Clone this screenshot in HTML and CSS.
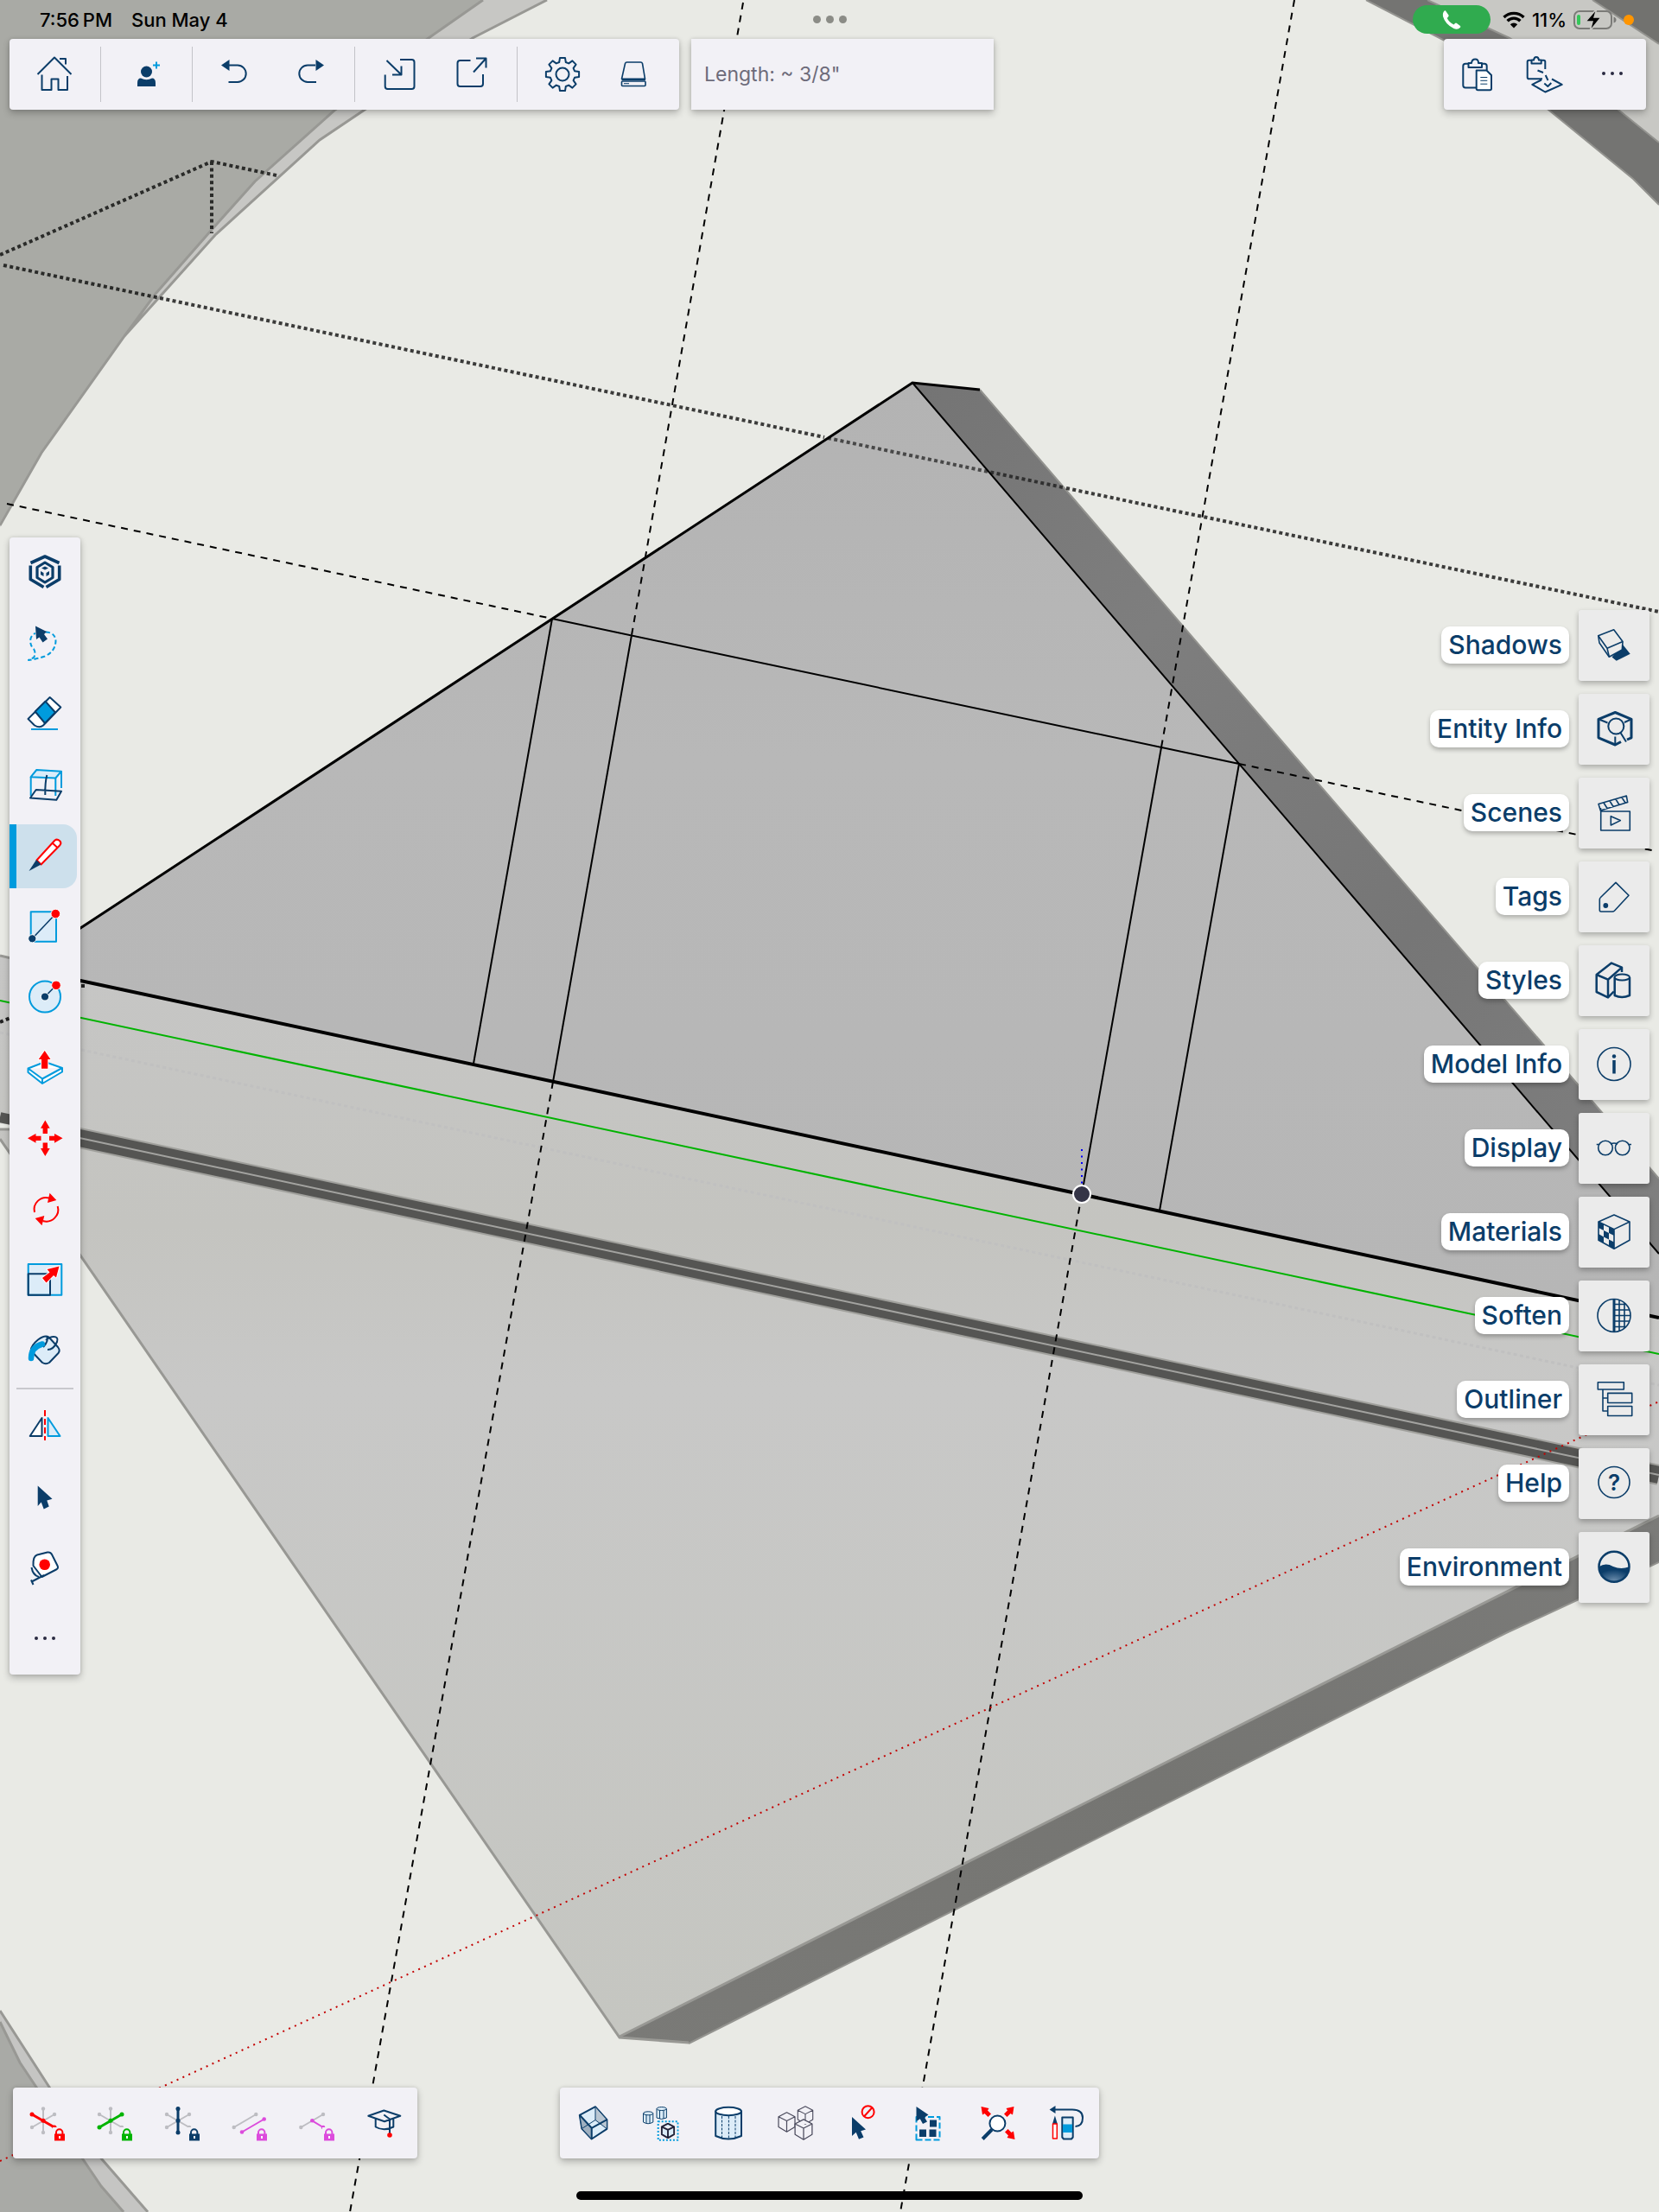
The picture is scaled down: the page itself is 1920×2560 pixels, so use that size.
FILE: index.html
```html
<!DOCTYPE html>
<html lang="en">
<head>
<meta charset="utf-8">
<meta name="viewport" content="width=device-width, initial-scale=1">
<title>Model editor</title>
<link rel="stylesheet" href="styles.css">
</head>
<body>
<div class="app">

<svg class="scene" viewBox="0 0 1920 2560" preserveAspectRatio="xMidYMid slice" aria-hidden="true">
  <defs>
    <linearGradient id="face" x1="0" y1="0" x2="0" y2="1"><stop offset="0" stop-color="#b3b3b3"/><stop offset=".4" stop-color="#b8b8b8"/><stop offset="1" stop-color="#b6b6b6"/></linearGradient>
    <linearGradient id="slab" x1="0" y1="0" x2="0" y2="1"><stop offset="0" stop-color="#c6c6c5"/><stop offset=".25" stop-color="#c4c4c0"/><stop offset=".4" stop-color="#c8c8c7"/><stop offset="1" stop-color="#c5c6c1"/></linearGradient>
    <linearGradient id="side" x1="0" y1="0" x2="1" y2="1"><stop offset="0" stop-color="#747474"/><stop offset=".3" stop-color="#7e7e7e"/><stop offset=".65" stop-color="#767676"/><stop offset="1" stop-color="#808080"/></linearGradient>
    <linearGradient id="lip" x1="0" y1="1" x2="1" y2="0"><stop offset="0" stop-color="#7a7a77"/><stop offset=".5" stop-color="#757572"/><stop offset="1" stop-color="#7b7b79"/></linearGradient>
  </defs>
  <!-- corner discs -->
  <path fill="#c7c7c4" d="M0 0H633L547 44 422 127 370 162 249 272 188 340 144 389 48 524 0 610Z"/>
  <path fill="#a9aaa5" d="M0 0H559L496 44 388 127 295 210 180 340 144 389 48 524 0 605Z"/>
  <path class="rim" d="M633 0L547 44 422 127 370 162 249 272 188 340 144 389 48 524 0 608M559 0L496 44 388 127 295 210 244 267 180 340 144 389"/>
  <path fill="#c8c8c4" d="M1600 0H1920V200Z"/>
  <path fill="#747472" d="M1581 0H1652L1747 44 1873 127 1920 165V237L1890 207 1792 127 1670 46Z"/>
  <path fill="#72726f" d="M1843 0H1920V51Z"/>
  <path class="rim thin" d="M1581 0L1670 46 1792 127 1890 207 1920 237M1652 0L1747 44 1873 127 1920 165M1843 0L1920 51"/>
  <path fill="#c5c5c3" d="M0 2327L58 2417 118 2499 171 2560H0Z"/>
  <path fill="#a9aaa6" d="M0 2340L23 2387 43 2417 96 2499 117 2530 143 2560H0Z"/>
  <path class="rim" d="M0 2327L58 2417 118 2499 171 2560M0 2340L23 2387 43 2417 96 2499 117 2530 143 2560"/>
  <!-- slab below the triangle -->
  <path fill="url(#slab)" d="M0 1106L93 1127 1920 1500V1760L717 2358 0 1318Z"/>
  <path fill="url(#lip)" d="M717 2357L1650 1889 1920 1754V1808L1743 1890 797 2365Z"/>
  <path class="rim" d="M0 1106L60 1120M0 1318L717 2358 797 2364M717 2357L1650 1889 1920 1754"/>
  <path class="rim thin" d="M797 2365L1743 1890 1920 1808"/>
  <path fill="#e9eae5" d="M0 1300L60 1309V1315L0 1306Z"/>
  <path class="rim" d="M0 1307H50"/>
  <g fill="none">
    <path stroke="#a0a09c" stroke-width="24" d="M50 1308L1920 1707"/>
    <path stroke="#555553" stroke-width="20" d="M50 1308L1920 1707"/>
    <path stroke="#555553" stroke-width="12" d="M0 1293L60 1306"/>
    <path stroke="#a3a3a0" stroke-width="2" d="M50 1308L1920 1707"/>
    <path stroke="#c0c0c0" stroke-width="3" stroke-dasharray="4 3.4" d="M0 1195L1920 1603"/>
    <path stroke="#00b300" stroke-width="2" d="M0 1158L1920 1567"/>
  </g>
  <!-- triangle -->
  <path fill="url(#side)" d="M1056 443L1134 451 1500 877 1920 1364V1451Z"/>
  <path fill="url(#face)" d="M23 1120L1056 443 1920 1451V1525Z"/>
  <path class="rim thin" d="M1134 451L1500 877 1920 1364"/>
  <g fill="none" stroke="#000" stroke-width="2">
    <path stroke-width="3" d="M23 1120L1056 443 1134 451"/>
    <path stroke-width="4" d="M23 1120L1920 1525"/>
    <path d="M1056 443L1920 1451M639 716L1434 884M639 716L548 1231M731 735L640 1252M1344 865L1252 1382M1434 884L1342 1401"/>
    <path stroke-dasharray="8 7" d="M860 3L731 735M640 1252L405 2560M1498 0L1344 865M1252 1382L1042 2560M8 583L639 716M1434 884L1916 985"/>
    <path stroke="#000" stroke-opacity=".75" stroke-width="4" stroke-dasharray="4 3.4" d="M0 295L245 187 320 203M245 187V270M4 307L954 506M1234 565L1920 708"/>
    <path stroke="#000" stroke-opacity=".6" stroke-width="4" stroke-dasharray="4 3.4" d="M958 507L1230 564"/>
    <path stroke="#222" stroke-width="4" stroke-dasharray="4 3.4" d="M0 1183L12 1178M94 1141H98"/>
    <path stroke="#c40000" stroke-dasharray="2 5.5" d="M0 2501L1920 1622"/>
    <path stroke="#00f" stroke-dasharray="2 5.5" d="M1252 1330V1380"/>
  </g>
  <circle cx="1252" cy="1382" r="10" fill="#353547" stroke="#fff" stroke-width="2"/>
</svg>

<svg class="defs" aria-hidden="true">
  <symbol id="axes" viewBox="0 0 60 60"><path fill="none" stroke="#bdbdc2" stroke-width="2" d="M26 13.5V41M13 20L39 35M39 20L13 35"/><g fill="#bdbdc2"><circle cx="26" cy="13.5" r="2.2"/><circle cx="26" cy="41" r="2.2"/><circle cx="13" cy="20" r="2.2"/><circle cx="39" cy="35" r="2.2"/><circle cx="39" cy="20" r="2.2"/><circle cx="13" cy="35" r="2.2"/></g></symbol>
  <symbol id="lock" viewBox="0 0 60 60"><path fill="#f2f1f6" d="M37 35h16v18H37z"/><path fill="none" stroke="currentColor" stroke-width="2" d="M41 43v-2a3.7 3.7 0 0 1 7.400 0v2"/><path fill="currentColor" d="M39 42.500h12v8H39z"/><path fill="#fff" d="M44 45h2v3h-2z"/></symbol>
  <symbol id="cube" viewBox="0 0 24 24"><path d="M12 .8L21.500 5.800V17.500L12 23.200 2.500 17.500V5.800ZM2.500 5.800L12 10.500 21.500 5.800M12 10.500V23"/></symbol>
</svg>

<div class="ui">
  <header class="top">
    <div class="status">
      <div class="clock"><time>7:56&#8201;PM</time><span>Sun May 4</span></div>
      <div class="grabber"><i></i><i></i><i></i></div>
      <div class="system">
        <span class="call"><svg width="24" height="24" viewBox="0 0 24 24"><path fill="#fff" d="M5 1.500L8.500 6.500Q9 7.500 8 8.500L6.800 10Q9 15 14.500 17.500L16 16Q17 15.200 18 16L22 19Q22.700 20 22 20.800 19 24 14.500 22 4.500 17 2 8 1.300 3.500 4 1.300 4.600 1 5 1.500Z"/></svg></span>
        <svg width="26" height="20" viewBox="0 0 26 20"><g fill="none" stroke="#000" stroke-width="3.400"><path d="M1.500 7A16.500 16.500 0 0 1 24.500 7M5.600 11.200A10.500 10.500 0 0 1 20.400 11.200"/></g><path d="M13 19.500L8.800 15.200A6 6 0 0 1 17.200 15.200Z"/></svg>
        <span>11%</span>
        <svg width="50" height="26" viewBox="0 0 50 26"><rect x="1" y="3" width="43" height="20" rx="6" fill="none" stroke="#7b7b78" stroke-width="2"/><path fill="#7b7b78" d="M46.500 9.500q3 1 3 3.500t-3 3.500z"/><rect x="4" y="7" width="4" height="12" rx="2" fill="#34c759"/><path stroke="#c8c8c4" stroke-width="1.500" d="M27 0L14 15h8l-3 11 13-16h-8z"/></svg>
        <i class="privacy"></i>
      </div>
    </div>
    <div class="bars">
      <nav class="bar" aria-label="File">
        <div class="group"><button aria-label="Home"><svg viewBox="0 0 60 60"><path d="M10.500 30L30 10.500 49.500 30M36 12h7v6.500M15.500 30.500V48H26.500V35.500H34.500V48H45V32"/></svg></button></div>
        <div class="group"><button aria-label="Share"><svg viewBox="0 0 60 60"><ellipse class="solid" cx="30.500" cy="27" rx="6.500" ry="6.500"/><path class="solid" d="M20 44V40Q20 34.500 24 34.500 30.500 38 37 34.500 41 34.500 41 40V44Z"/><path class="sky" d="M42 15.500v8M38 19.500h8"/></svg></button></div>
        <div class="group"><button aria-label="Undo"><svg viewBox="0 0 60 60"><path class="solid" d="M11 19.500L20.500 13V26Z"/><path d="M20 19.500H30a9.700 9.700 0 0 1 0 19.400H19.500"/></svg></button><button aria-label="Redo"><svg viewBox="0 0 60 60"><path class="solid" d="M48 19.500L38.500 13V26Z"/><path d="M38 19.500H29a9.700 9.700 0 0 0 0 19.400H39"/></svg></button></div>
        <div class="group"><button aria-label="Import"><svg viewBox="0 0 60 60"><path d="M14.500 14L31.500 30.500V20.500M31.500 30.500H21M12.700 30.500V44q0 3 3 3H43.500q3 0 3-3V16q0-3-3-3H30"/></svg></button><button aria-label="Export"><svg viewBox="0 0 60 60"><path d="M29.500 14H17.500q-3 0-3 3V41q0 3 3 3H41q3 0 3-3V30M33 27.500L47.500 11.500M36 11.500H47.500V22.500"/></svg></button></div>
        <div class="group"><button aria-label="Settings"><svg viewBox="-30 -30 60 60"><path d="M14-3.800L19.100-3V3L14 3.800 12.600 7.200 15.600 11.400 11.400 15.600 7.200 12.600 3.800 14 3 19.100H-3L-3.800 14-7.200 12.600-11.400 15.600-15.600 11.400-12.600 7.200-14 3.800-19.100 3V-3L-14-3.800-12.600-7.200-15.600-11.400-11.400-15.600-7.200-12.600-3.800-14-3-19.100H3L3.800-14 7.200-12.600 11.400-15.600 15.600-11.400 12.600-7.200Z"/><circle r="7.500"/></svg></button><button aria-label="Storage"><svg viewBox="0 0 60 60"><path class="fine" d="M22.500 16h16q1.500 0 2 1.500L43.500 35.300H16.500L20.500 17.500q.5-1.500 2-1.500Z"/><rect class="fine" x="16.500" y="38" width="27.500" height="5.500" rx="1"/><path class="hair" d="M16.500 36.500h27.500M19 40.700h6"/></svg></button></div>
      </nav>
      <input class="measure" type="text" aria-label="Measurement" value="Length: ~ 3/8&quot;">
      <nav class="bar bar-right" aria-label="Clipboard">
        <button aria-label="Paste"><svg viewBox="0 0 60 60"><path d="M28 45.500H16q-2.700 0-2.700-2.700V20.500q0-2.700 2.700-2.700h3.500M35 17.800h3q2.700 0 2.700 2.700V25M19.500 22V17H23Q23.500 12.500 27.300 12.500T31 17H35V22Z"/><path fill="#fff" d="M28.700 25.500H40.500L46 31V46.500q0 1.700-1.700 1.700H30.400q-1.700 0-1.700-1.700Z"/><path class="hair" d="M33.300 33.500h8M33.300 37.300h8M33.300 41.200h8"/></svg></button>
        <button aria-label="Paste in place"><svg viewBox="0 0 60 60"><path d="M27 35.200H11.500q-1.800 0-1.800-1.800V15.500q0-1.800 1.800-1.800H14.500M26 13.800H28.500q1.800 0 1.800 1.800V24M14.500 17.500V13.500H17Q17.500 10 20 10T23 13.500H25.700V17.500ZM21.500 25.500L28 28M30.700 31L33.500 37M29.300 40.500L33.300 44 37.300 40M26 36.500L15.300 41.800 30.300 50.500 49.700 41.800 38 35.500"/></svg></button>
        <button aria-label="More"><svg viewBox="0 0 60 60"><g class="dots"><circle cx="20" cy="29" r="2"/><circle cx="30" cy="29" r="2"/><circle cx="40" cy="29" r="2"/></g></svg></button>
      </nav>
    </div>
  </header>

  <main class="middle">
    <nav class="tools" aria-label="Tools">
      <button aria-label="Orbit cube"><svg viewBox="0 0 60 60"><g stroke-width="4"><path d="M13.500 18.500L30 11 46.500 18.500" stroke-width="3.600"/><path stroke-width="3.600" d="M13.300 21.500V37.500L28.500 46.500M46.700 21.500V37.500L31.500 46.500"/><path stroke-width="3.200" d="M30 18L39 23.500V35.500L30 41 21 35.500V23.500Z"/></g><path class="solid" d="M30 22.500l4 2-4 2-4-2zM25 28l3.500 2v4L25 32zM35 28l-3.500 2v4l3.500-2z"/></svg></button>
      <button aria-label="Lasso"><svg viewBox="0 0 60 60"><path class="sky" stroke-dasharray="5 3" d="M31 16.500Q42 17 42.500 27 42 39 30 44.500 20 48 11 49L17 46Q20 41 17 36 12 31 13.500 24 15 19 19 18"/><path class="solid" d="M19 9.500L32 16 29 19 33 24.500 27.500 28.500 23.500 22.500 20 25Z"/></svg></button>
      <button aria-label="Eraser"><svg viewBox="0 0 60 60"><path fill="#fff" d="M10.500 35L35.700 10 48.300 21.500 28 42.500Q24 46 18 42.500Z"/><path fill="#009bdd" d="M18.700 26.500L30.500 14.700 42 27.500 30 40Z"/><path class="sky" d="M14 47h31"/></svg></button>
      <button aria-label="Section"><svg viewBox="0 0 60 60"><path class="sky" fill="#d9ecf9" d="M13.700 20.200L20.300 12 49 13.700 42.300 21.500Z"/><path class="sky" d="M13.700 20V42M42.300 21.500V42M49 13.700V33"/><path d="M13 44.500L19.700 35 49 36.700 43.300 46.700ZM32.300 18Q30 27 30.300 41"/></svg></button>
      <button class="active" aria-label="Line" aria-pressed="true"><svg viewBox="0 0 60 60"><path class="red" fill="#fff" d="M20.500 34.500L41.500 11.500Q44 9.500 47 12 49.500 14.500 47.500 17L25.500 39.500ZM38.500 14.500L44.500 20"/><path class="solid" d="M11.500 47L20 34 25.500 39.500Z"/></svg></button>
      <button aria-label="Rectangle"><svg viewBox="0 0 60 60"><path class="sky" fill="#dcecf8" d="M13.700 12.300H43V46.700H13.700Z"/><path d="M15.300 43.300L42 15" stroke-width="1.600"/><circle cx="42.300" cy="14.500" r="5.300" class="dot-red"/><circle cx="15.300" cy="43.300" r="4.600" class="dot-navy"/></svg></button>
      <button aria-label="Circle"><svg viewBox="0 0 60 60"><circle class="sky" fill="#dcecf8" cx="30" cy="28.500" r="18"/><path stroke-width="1.600" d="M30 28.500L43 15.300"/><circle cx="43" cy="15.300" r="5.300" class="dot-red"/><circle cx="30" cy="28.500" r="4.600" class="dot-navy"/></svg></button>
      <button aria-label="Push pull"><svg viewBox="0 0 60 60"><path class="sky" fill="#fff" d="M10.500 29.500L30 22 50 29V33.500L27 47 10.500 34ZM10.500 29.500L27 41.500 50 29M27 41.500V47"/><path class="halo" d="M29.700 9L36.500 19H33.300V29.700H26V19H22.700Z"/></svg></button>
      <button aria-label="Move"><svg viewBox="0 0 60 60"><g class="dr"><path d="M30.300 7.500L35.700 16.700H33V23H27.600V16.700H25ZM30.300 49L35.700 40H33V33.500H27.600V40H25ZM10 28.300L19.500 23V25.700H25.500V31H19.500V33.700ZM50.500 28.300L41 23V25.700H35V31H41V33.700Z"/></g></svg></button>
      <button aria-label="Rotate"><svg viewBox="0 0 60 60"><path class="red" d="M18 32A13.700 13.700 0 0 1 35 15.500M44.700 25A13.700 13.700 0 0 1 27.500 42"/><path class="dr" d="M35.500 9.700L43.300 18 33 21ZM26.500 47.300L18.700 39 29.300 36Z"/></svg></button>
      <button aria-label="Scale"><svg viewBox="0 0 60 60"><path class="sky" fill="#dcecf8" d="M10.700 10H49.300V45.700H10.700Z"/><path d="M10.700 21.300H36V45.700H10.700Z"/><path class="halo" d="M46.500 12.500L43 25.500 40 23 31.500 31.500 27 26 35.500 19.500 32.500 16Z"/></svg></button>
      <button aria-label="Paint"><svg viewBox="0 0 60 60"><path fill="#dcecf8" d="M13.700 28L27 42Q31 44.500 35 42L45.500 31Q48 28 45 24L34.500 12.500Q30 9.500 22 15.500 14 22 13.700 28Z"/><path d="M33 27Q40 27 44 18 46 12 40 12 36 12 31 16M28 24Q35 16 32 12"/><path fill="none" stroke="#009bdd" stroke-width="6.500" stroke-linecap="round" d="M27 20.500Q14 24 14 37"/></svg></button>
      <hr>
      <button aria-label="Flip"><svg viewBox="0 0 60 60"><path fill="#fff" d="M26.500 20V41H12.700Z"/><path class="sky" fill="#dcecf8" d="M33.500 20V41H47.500Z"/><path class="red" stroke-dasharray="7 3" d="M30 11V46"/></svg></button>
      <button aria-label="Select"><svg viewBox="0 0 60 60"><path class="solid" d="M21.700 16.500V40L25.700 35.500 28.700 43.500 34.700 40.500 32.300 33.500 38.500 31.700Z"/></svg></button>
      <button aria-label="Tape measure"><svg viewBox="0 0 60 60"><path fill="#fff" d="M16.500 27Q16 16 21 14.500L33 11.500Q36.500 11 38 14L44.500 27Q46 30 43 31.500L26.500 40Z"/><path d="M14.700 45.500L29 38M14 43.500L16.500 49M14.500 29Q16 38 23 40" /><circle class="dr" cx="29.700" cy="25.800" r="6.300"/></svg></button>
      <button aria-label="More tools"><svg viewBox="0 0 60 60"><g class="dots"><circle cx="20" cy="29" r="2"/><circle cx="30" cy="29" r="2"/><circle cx="40" cy="29" r="2"/></g></svg></button>
    </nav>

    <nav class="panels" aria-label="Panels">
      <button><span class="pill">Shadows</span><span class="tile"><svg viewBox="0 0 60 60"><path class="solid" d="M27.500 43.500L40 29 48.700 39.700 32.700 47.800Z"/><path class="fine" fill="#ebebeb" d="M11.700 18.700L29.700 11.800 40 25.600 39.300 35 24.300 43.200 13 27Z"/><path class="fine" d="M11.700 18.700L22 33.200 40 25.600M22 33.200L24.300 43"/></svg></span></button>
      <button><span class="pill">Entity Info</span><span class="tile"><svg viewBox="0 0 60 60"><path stroke-width="3" d="M38 44.500L31.300 48 12 39.800V18.300L31.300 10.500 50 18.300V39.800L45 42"/><path d="M12 18.300L22.500 22.500M50 18.300L42 22M31.300 38.500V48M37.500 34L44 44.500"/><circle cx="32.300" cy="26.500" r="9"/></svg></span></button>
      <button><span class="pill">Scenes</span><span class="tile"><svg viewBox="0 0 60 60"><path class="fine" d="M14.700 28H48.300V50H14.700ZM26.300 33.700V44L37.300 38.600ZM12 19.500L44.300 10 45.700 17.600 14.300 27ZM18 18L22 24.500M25 16L29 22.500M32 14L36 20.500M39 12L43 18M14.500 28V24"/></svg></span></button>
      <button><span class="pill">Tags</span><span class="tile"><svg viewBox="0 0 60 60"><path class="fine" d="M32 13.400L47 28.300 30.500 46Q29.500 47 28 47H15Q13.300 47 13.300 45.300V33Q13.300 31.500 14.500 30.500Z"/><circle class="solid" cx="20.300" cy="40" r="2.900"/></svg></span></button>
      <button><span class="pill">Styles</span><span class="tile"><svg viewBox="0 0 60 60"><path d="M29.700 42.500L23 49.400 9.700 43V23L27 9.600 39 14.600V20M9.700 23L23 28.700 39 14.600M23 28.700V49" stroke-width="2.500"/><path fill="#ebebeb" stroke-width="2.500" d="M30.700 26V47Q39 51 48 47V26"/><ellipse fill="#ebebeb" cx="39.300" cy="26" rx="8.700" ry="3.500"/></svg></span></button>
      <button><span class="pill">Model Info</span><span class="tile"><svg viewBox="0 0 60 60"><circle class="fine" cx="30" cy="29.500" r="19"/><circle class="solid" cx="30" cy="20.500" r="2.200"/><path stroke-width="3.500" d="M30 25V40.500"/></svg></span></button>
      <button><span class="pill">Display</span><span class="tile"><svg viewBox="0 0 60 60"><g class="fine"><circle cx="20" cy="29.500" r="8.300"/><circle cx="39.700" cy="29.500" r="8.300"/><path d="M9.700 25.500H13M46.500 25.500H50M26 25Q30 23 34 25"/></g></svg></span></button>
      <button><span class="pill">Materials</span><span class="tile"><svg viewBox="0 0 60 60"><path class="fine" d="M30 10L48 18V39.300L30 49.200 12 39.300V18Z"/><path class="fine" d="M12 18L30 26.600 48 18M30 26.600V49"/><path class="solid" d="M12 18L18 21V28L12 25ZM24 24L30 26.600V34L24 31ZM18 28L24 31V38.500L18 35.500ZM12 32L18 35.500V42.500L12 39.300ZM24 38.500L30 41.500V49L24 46Z"/></svg></span></button>
      <button><span class="pill">Soften</span><span class="tile"><svg viewBox="0 0 60 60"><circle class="fine" cx="30" cy="29.500" r="19"/><path stroke-width="3" d="M30 10.500V48.500"/><path class="fine" d="M36 11.500V47.500M42 15V44M30 16.500H43M30 23H48M30 29.500H49M30 36H48M30 42.500H43"/></svg></span></button>
      <button><span class="pill">Outliner</span><span class="tile"><svg viewBox="0 0 60 60"><path class="fine" d="M11.300 9.800H41.300V18H11.300ZM22.700 22.400H50.700V33.500H22.700ZM22.700 37.500H50.700V48.500H22.700ZM17 18V43H22.700M17 28H22.700"/></svg></span></button>
      <button><span class="pill">Help</span><span class="tile"><svg viewBox="0 0 60 60"><circle class="fine" cx="30" cy="28.500" r="18"/><text x="30" y="37.500" text-anchor="middle">?</text></svg></span></button>
      <button><span class="pill">Environment</span><span class="tile"><svg viewBox="0 0 60 60"><defs><radialGradient id="globe" cx=".5" cy=".9" r=".6"><stop offset="0" stop-color="#6588a8"/><stop offset="1" stop-color="#0b3d69"/></radialGradient></defs><path fill="url(#globe)" stroke="none" d="M12.500 29.300Q20 24 29 29 38 33 47.500 29.300A17.500 17.500 0 0 1 12.500 29.300Z"/><circle stroke-width="2.500" cx="30" cy="29.300" r="17.500"/></svg></span></button>
    </nav>
  </main>

  <footer class="bottom">
    <div class="dock">
      <nav class="bar axis-bar" aria-label="Axis locks">
        <button aria-label="Lock red axis"><svg viewBox="0 0 60 60" color="#f00"><use href="#axes"/><path class="axis" d="M13 20L39 35"/><g class="ends"><circle cx="13" cy="20" r="2.500"/><circle cx="26" cy="27.300" r="2.500"/><circle cx="39" cy="35" r="2.500"/></g><use href="#lock"/></svg></button>
        <button aria-label="Lock green axis"><svg viewBox="0 0 60 60" color="#00b400"><use href="#axes"/><path class="axis" d="M39 20L13 35"/><g class="ends"><circle cx="39" cy="20" r="2.500"/><circle cx="26" cy="27.300" r="2.500"/><circle cx="13" cy="35" r="2.500"/></g><use href="#lock"/></svg></button>
        <button aria-label="Lock blue axis"><svg viewBox="0 0 60 60" color="#0b3d69"><use href="#axes"/><path class="axis" d="M26 13.500V41"/><g class="ends"><circle cx="26" cy="13.500" r="2.500"/><circle cx="26" cy="27.300" r="2.500"/><circle cx="26" cy="41" r="2.500"/></g><use href="#lock"/></svg></button>
        <button aria-label="Lock parallel"><svg viewBox="0 0 60 60" color="#dc4bdc"><path class="ghost" d="M12.700 35L38.300 20"/><g class="ghost-ends"><circle cx="12.700" cy="35" r="2.200"/><circle cx="38.300" cy="20" r="2.200"/></g><path class="axis slim" d="M22 40.500L47.700 25.500"/><g class="ends"><circle cx="22" cy="40.500" r="2.300"/><circle cx="47.700" cy="25.500" r="2.300"/></g><use href="#lock"/></svg></button>
        <button aria-label="Lock perpendicular"><svg viewBox="0 0 60 60" color="#dc4bdc"><path class="ghost" d="M12.300 35L38 20"/><g class="ghost-ends"><circle cx="12.300" cy="35" r="2.200"/><circle cx="38" cy="20" r="2.200"/></g><path class="axis slim" d="M25.300 27.300L38 35"/><g class="ends"><circle cx="25.300" cy="27.300" r="2.300"/><circle cx="38" cy="35" r="2.300"/></g><use href="#lock"/></svg></button>
        <button aria-label="Learn"><svg viewBox="0 0 60 60"><path d="M12.300 21.800L30.300 15.500 49.300 21.800 31 28.200ZM20.700 25V34.500Q30 40 41.300 34.500V25M30.300 20.500L37 25.500V42"/><circle class="dr" cx="37" cy="44" r="2.800"/></svg></button>
      </nav>
      <nav class="bar" aria-label="View">
        <button aria-label="X-ray"><svg viewBox="0 0 60 60"><path fill="#dcecf8" d="M13.800 20.800L32 11.200 45.400 26.200V36.800L27.700 48.500 16.400 36.500Z"/><path class="hair" fill="#9fb0c0" d="M13.800 20.800L27.700 35.800V48.500L16.400 36.500Z"/><path class="hair" fill="#b9c6d2" d="M32 11.200V26.500L45.400 36.800V26.200Z"/><path class="hair" d="M16.400 36.500L32 26.500"/><path d="M13.800 20.800L27.700 35.800 45.400 26.200M27.700 35.800V48"/></svg></button>
        <button aria-label="Hide rest of model"><svg viewBox="0 0 60 60"><g class="hair" fill="#dcecf8"><path d="M9.500 19V29Q15 32.500 20.800 29V19M25 13.500V24Q30.500 27 36.400 24V13.500M13 20V30M17 20V30M28.500 15V25M33 15V25"/><ellipse cx="15.200" cy="18.800" rx="5.600" ry="2"/><ellipse cx="30.700" cy="13.500" rx="5.600" ry="2"/></g><path class="sky" stroke-dasharray="2 2" d="M26.700 28.200H49.500V49.800H26.700Z"/><g class="kept"><use href="#cube" x="29" y="30" width="18" height="18"/></g></svg></button>
        <button aria-label="Hidden geometry"><svg viewBox="0 0 60 60"><path fill="#dcecf8" d="M15.200 16.500V45Q30 52 45 45V16.500Z"/><ellipse fill="#fff" cx="30.100" cy="16.500" rx="14.900" ry="4.700"/><path class="hair" stroke-dasharray="3 1.500" d="M22.500 22V48M30.400 22V49M38 22V48"/></svg></button>
        <button aria-label="Hidden objects"><svg viewBox="0 0 60 60"><g class="boxes"><use href="#cube" x="28" y="10" width="26" height="22"/><use href="#cube" x="5" y="17" width="29" height="24"/><use href="#cube" x="24" y="25" width="30" height="25"/></g></svg></button>
        <button aria-label="Deselect"><svg viewBox="0 0 60 60"><path class="solid" d="M17 23V45L21.700 40.800 25 48.700 30.500 46.500 27.200 39.200 33 37.500Z"/><circle class="red" cx="35.600" cy="17.200" r="7"/><path class="red" d="M31 22.500L40.500 12"/></svg></button>
        <button aria-label="Select all"><svg viewBox="0 0 60 60"><path class="sky" stroke-dasharray="7 3" d="M13.500 49.500V23H40.500V49.500Z"/><path class="solid" d="M29 26.500h8v8h-8zM17 37.500h8V46h-8zM28.500 37.500h8V46h-8z"/><path class="solid" d="M13.500 11V28L17.800 25.200 21 31 26 28.500 23 23.500 27.500 20.500Z"/></svg></button>
        <button aria-label="Zoom extents"><svg viewBox="0 0 60 60"><path stroke-width="4" d="M23 37.500L12.200 48.500"/><circle fill="#fff" cx="29.400" cy="30.500" r="9"/><path class="dr" d="M10.500 11L19.500 13 18 15.500 22 19.500 18.500 23 14.500 19 12 20.500ZM48.500 11L39.500 13 41 15.500 37 19.500 40.500 23 44.500 19 47 20.500ZM49.500 49L40.500 47 42 44.500 38 40.500 41.500 37 45.500 41 48 39.500Z"/></svg></button>
        <button aria-label="Reset workspace"><svg viewBox="0 0 60 60"><path class="solid" d="M11.600 14.500L18.500 10V19Z"/><path d="M18 14.500H38Q50 14.500 50 24 50 33.500 41.500 34"/><path class="solid" d="M17.900 21.500L20.800 31H15Z"/><path class="barrel" d="M15.500 31h4.800v17h-4.800z"/><path fill="#dcecf8" d="M26.300 23.500H38.700V46.500L37 48.500H28L26.300 46.500Z"/><path class="band" d="M27 31.500h11v9.500h-11z"/></svg></button>
      </nav>
    </div>
    <div class="home-indicator"></div>
  </footer>
</div>
</div>
</body>
</html>
```
FILE: styles.css
```css
* { box-sizing: border-box; }

:root {
  --navy: #0b3d69;
  --sky: #009bdd;
  --panel: #f2f1f6;
  --shadow: 0 4px 8px rgba(0, 0, 0, .24), 0 0 4px rgba(0, 0, 0, .12);
}

body {
  margin: 0;
  font-family: Inter, "Liberation Sans", sans-serif;
  color: #000;
}

.app {
  position: relative;
  min-height: 100vh;
  background: #e9eae5;
  overflow: hidden;
}

.scene {
  position: absolute;
  inset: 0;
  width: 100%;
  height: 100%;
}

.scene .rim { fill: none; stroke: #989894; stroke-width: 3; }
.scene .rim.thin { stroke-width: 2; stroke: #93938f; }
.defs { position: absolute; width: 0; height: 0; }

/* the interface floats above the drawing */
.ui {
  position: relative;
  min-height: 100vh;
  display: grid;
  grid-template-rows: 1fr auto 1fr;
}

button {
  border: 0;
  padding: 0;
  background: none;
  font: inherit;
  color: inherit;
  cursor: pointer;
}

button svg {
  display: block;
  width: 60px;
  height: 60px;
  fill: none;
  stroke: var(--navy);
  stroke-width: 2;
  stroke-linejoin: round;
}

button svg .solid { fill: var(--navy); stroke-width: 0; }
button svg .sky { stroke: var(--sky); }
button svg .red { stroke: #f00; }
button svg .dr { fill: #f00; stroke: none; }
button svg .halo { fill: #f00; stroke: #fff; stroke-width: 2; paint-order: stroke; }
button svg .dot-red { fill: #f00; stroke: #fff; stroke-width: 1; }
button svg .dot-navy { fill: var(--navy); stroke: #fff; stroke-width: 1; }
button svg .fine { stroke-width: 1.6; }
button svg .hair { stroke-width: 1; }
button svg .dots { fill: #2a2a40; stroke: none; }
button svg .axis { stroke: currentColor; stroke-width: 3; }
button svg .axis.slim { stroke-width: 2; }
button svg .ends { fill: currentColor; stroke: none; }
button svg .ghost { stroke: #bdbdc2; }
button svg .ghost-ends { fill: #bdbdc2; stroke: none; }
button svg .kept { fill: #dcecf8; stroke: #222238; stroke-width: 2.5; }
button svg .boxes { fill: #f2f1f6; stroke: #4a4a5c; stroke-width: 1.2; }
button svg .barrel { fill: #fff; stroke: #f00; stroke-width: 1.5; }
button svg .band { fill: var(--sky); stroke: none; }
button svg text { font-size: 26px; font-weight: 600; fill: var(--navy); stroke: none; }
button svg use[href="#axes"], button svg use[href="#lock"] { stroke: none; }

/* status bar */
.status {
  display: grid;
  grid-template-columns: 1fr auto 1fr;
  align-items: center;
  height: 45px;
  padding: 0 29px;
  font-size: 22px;
  font-weight: 500;
}

.clock { display: flex; gap: 22px; padding-left: 17px; }
.grabber { display: flex; gap: 6px; }
.grabber i { width: 9px; height: 9px; border-radius: 50%; background: #8b8c86; }
.system { display: flex; align-items: center; justify-content: flex-end; gap: 8px; }

.call {
  display: flex;
  align-items: center;
  justify-content: center;
  width: 90px;
  height: 33px;
  margin-right: 6px;
  border-radius: 17px;
  background: #30ab4f;
}

.privacy { width: 12px; height: 12px; border-radius: 50%; background: #ff9500; }

/* toolbars */
.bars { display: flex; gap: 14px; padding: 0 15px 0 11px; }

.bar {
  display: flex;
  background: var(--panel);
  border-radius: 4px;
  box-shadow: var(--shadow);
}

.bar button {
  display: grid;
  place-items: center;
  width: 78px;
  height: 82px;
}

.group { display: flex; position: relative; padding: 0 12px 0 11px; }
.group button { width: 82px; }
.group + .group { margin-left: 1px; }

.group + .group::before {
  content: "";
  position: absolute;
  left: -1px;
  top: 9px;
  bottom: 9px;
  width: 1px;
  background: #c3c3c8;
}

.measure {
  width: 350px;
  height: 82px;
  padding: 0 15px;
  border: 0;
  border-radius: 0;
  background: var(--panel);
  box-shadow: var(--shadow);
  font: 400 23px Inter, "Liberation Sans", sans-serif;
  color: #6d6b7a;
}

.bar-right { margin-left: auto; }

/* side columns */
.middle {
  display: flex;
  justify-content: space-between;
  align-items: center;
  padding: 0 11px;
}

.tools {
  display: flex;
  flex-direction: column;
  width: 82px;
  background: var(--panel);
  border-radius: 4px;
  box-shadow: var(--shadow);
}

.tools button {
  display: flex;
  align-items: center;
  justify-content: center;
  width: 82px;
  height: 74px;
  margin: 4px 0;
}

.tools .active {
  width: 78px;
  padding-right: 4px;
  border-left: 8px solid var(--sky);
  border-radius: 0 16px 16px 0;
  background: #cde0ec;
}

.tools hr {
  width: 66px;
  height: 2px;
  margin: 0 8px 2px;
  border: 0;
  background: #c8c8cd;
}

.panels {
  display: flex;
  flex-direction: column;
  gap: 15px;
}

.panels button {
  display: flex;
  align-items: center;
  justify-content: flex-end;
  gap: 11px;
}

.pill {
  padding: 0 8px;
  border-radius: 10px;
  background: #fff;
  box-shadow: 0 3px 5px rgba(0, 0, 0, .25);
  font-size: 30px;
  font-weight: 500;
  line-height: 43px;
  color: var(--navy);
}

.tile {
  display: grid;
  place-items: center;
  width: 82px;
  height: 82px;
  border-radius: 3px;
  background: #ebebeb;
  box-shadow: 0 3px 6px rgba(0, 0, 0, .28);
}

/* bottom docks */
.bottom { align-self: end; }

.dock {
  display: grid;
  grid-template-columns: 1fr auto 1fr;
  padding: 0 15px;
}

.axis-bar { justify-self: start; }

.home-indicator {
  width: 586px;
  max-width: 60%;
  height: 10px;
  margin: 38px auto 14px;
  border-radius: 5px;
  background: #000;
}
```
